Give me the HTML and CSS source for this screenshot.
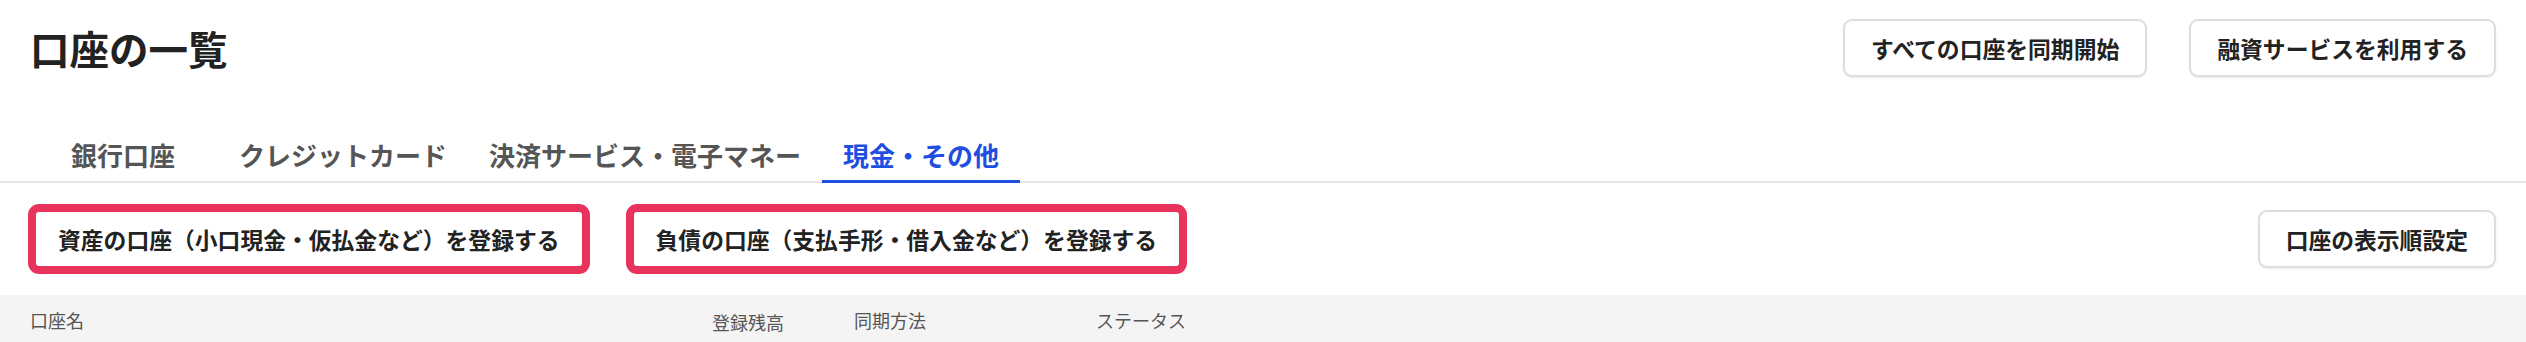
FILE: index.html
```html
<!DOCTYPE html>
<html lang="ja">

<head>
    <meta charset="UTF-8">
    <meta name="viewport" content="width=device-width, initial-scale=1.0">
    <title>口座の一覧</title>
    <link rel="stylesheet" href="styles.css">
</head>

<body>
    <div class="page-header">
        <h1>口座の一覧</h1>
        <div class="header-actions">
            <button class="btn">すべての口座を同期開始</button>
            <button class="btn">融資サービスを利用する</button>
        </div>
    </div>

    <nav class="tabs">
        <a class="tab tab-first">銀行口座</a>
        <a class="tab">クレジットカード</a>
        <a class="tab">決済サービス・電子マネー</a>
        <a class="tab active">現金・その他</a>
    </nav>

    <div class="toolbar">
        <div class="register">
            <button class="btn btn-mark">資産の口座（小口現金・仮払金など）を登録する</button>
            <button class="btn btn-mark">負債の口座（支払手形・借入金など）を登録する</button>
        </div>
        <button class="btn">口座の表示順設定</button>
    </div>

    <div class="table-head">
        <span>口座名</span>
        <span class="col-balance">登録残高</span>
        <span>同期方法</span>
        <span>ステータス</span>
    </div>
</body>

</html>
```

FILE: styles.css
```css
body {
    margin: 0;
    font-family: "Noto Sans CJK JP", "Noto Sans", sans-serif;
    background: #fff;
    color: #222;
}

.page-header {
    display: flex;
    justify-content: space-between;
    align-items: center;
    padding: 19px 30px 0 30px;
}

h1 {
    margin: 0;
    font-size: 39.5px;
    line-height: 58px;
    font-weight: 700;
    color: #222;
}

.header-actions {
    display: flex;
    gap: 42px;
}

.btn {
    font-family: inherit;
    font-size: 22.8px;
    font-weight: 700;
    color: #222;
    background: #fff;
    border: 2px solid #dedede;
    border-radius: 9px;
    height: 58px;
    padding: 0 26px;
    box-shadow: 0 1px 2px rgba(0, 0, 0, 0.08);
    cursor: pointer;
    white-space: nowrap;
}

.tabs {
    display: flex;
    margin-top: 50px;
    padding-left: 28px;
    border-bottom: 2px solid #e4e4e4;
}

.tab {
    min-width: 190px;
    box-sizing: border-box;
    padding: 15px 21px 12px;
    text-align: center;
    font-size: 26px;
    line-height: 26px;
    font-weight: 700;
    color: #555;
    border-bottom: 3px solid transparent;
    margin-bottom: -2px;
}

.tab.active {
    color: #1f4fe0;
    border-bottom-color: #1f4fe0;
}

.toolbar {
    display: flex;
    justify-content: space-between;
    align-items: center;
    padding: 21px 30px 21px 28px;
}

.register {
    display: flex;
    gap: 36px;
}

.btn-mark {
    height: 70px;
    border: 8px solid #e8335c;
    border-radius: 11px;
    padding: 0 22px;
    box-shadow: none;
}

.table-head {
    display: grid;
    grid-template-columns: 682px 142px 242px 1fr;
    align-items: center;
    height: 50px;
    padding: 0 30px;
    background: #f5f4f4;
    font-size: 18px;
    color: #555;
}

.col-balance {
    padding-top: 3px;
}
```
